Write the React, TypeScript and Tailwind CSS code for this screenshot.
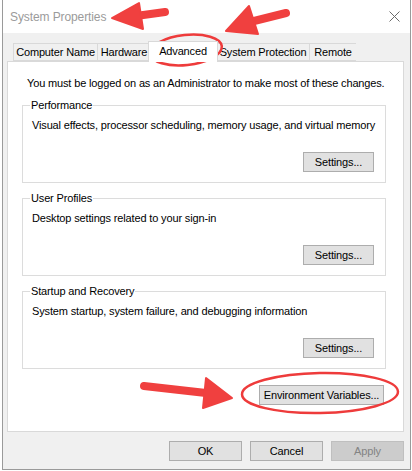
const btn =
  "h-[20px] whitespace-nowrap border border-[#adadad] bg-[#e1e1e1] leading-none text-black flex items-center justify-center";

function GroupBox({
  title,
  text,
  className = "",
}: {
  title: string;
  text: string;
  className?: string;
}) {
  return (
    <div
      className={`relative h-[78px] border border-[#dcdcdc] pl-[9px] pr-[11px] pt-[12px] ${className}`}
    >
      {/* legend over the top border */}
      <span className="absolute -top-[8px] left-[7px] whitespace-nowrap bg-white px-[1px] leading-[15px]">
        {title}
      </span>
      <p className="whitespace-nowrap leading-[15px]">{text}</p>
      <div className="mt-[19px] flex justify-end">
        <button className={`${btn} w-[71px]`}>Settings...</button>
      </div>
    </div>
  );
}

function Tab({
  label,
  active = false,
  className = "",
}: {
  label: string;
  active?: boolean;
  className?: string;
}) {
  if (active) {
    return (
      <div
        className={`relative z-10 -mx-[2px] -mb-[1px] flex h-[21px] items-center justify-center whitespace-nowrap border border-b-0 border-[#d9d9d9] bg-white pb-[2px] leading-none ${className}`}
      >
        {label}
      </div>
    );
  }
  return (
    <div
      className={`flex h-[18px] items-center justify-center whitespace-nowrap border border-r-0 border-[#d9d9d9] bg-[#f0f0f0] leading-none ${className}`}
    >
      {label}
    </div>
  );
}

export default function App() {
  return (
    <div
      className="relative h-[471px] w-[412px] overflow-hidden bg-white text-[11px] tracking-[-0.15px] text-black"
      style={{ fontFamily: '"Liberation Sans", Arial, sans-serif' }}
    >
      <div className="ml-[2px] flex h-[470px] w-[409px] flex-col border-x border-b border-[#9a9a9a]">
        {/* Title bar */}
        <div className="flex h-[33px] items-center justify-between bg-white pl-[7px] pr-[9px]">
          <span className="text-[12px] tracking-[-0.1px] text-[#9b9b9b]">System Properties</span>
          <svg width="11" height="11" viewBox="0 0 11 11" className="mr-[1px]">
            <path d="M0.5 0.5 L10.5 10.5 M10.5 0.5 L0.5 10.5" stroke="#6b6b6b" strokeWidth="1" />
          </svg>
        </div>

        {/* Body */}
        <div className="flex flex-1 flex-col bg-[#f0f0f0] pl-[4px] pr-[6px] pt-[8px]">
          {/* Tabs */}
          <div className="flex items-end pl-[6px]">
            <Tab label="Computer Name" className="w-[84px]" />
            <Tab label="Hardware" className="w-[53px]" />
            <Tab label="Advanced" active className="w-[70px]" />
            <Tab label="System Protection" className="w-[93px]" />
            <Tab label="Remote" className="w-[47px] border-r" />
          </div>

          {/* Tab panel */}
          <div className="h-[371px] border border-[#d9d9d9] bg-white pl-[14px] pr-[17px] pt-[14px]">
            <p className="whitespace-nowrap pl-[5px] leading-[15px]">
              You must be logged on as an Administrator to make most of these changes.
            </p>
            <GroupBox
              title="Performance"
              text="Visual effects, processor scheduling, memory usage, and virtual memory"
              className="mt-[14px]"
            />
            <GroupBox
              title="User Profiles"
              text="Desktop settings related to your sign-in"
              className="mt-[15px]"
            />
            <GroupBox
              title="Startup and Recovery"
              text="System startup, system failure, and debugging information"
              className="mt-[15px]"
            />
            <div className="mt-[16px] flex justify-end pr-[2px]">
              <button className={`${btn} w-[125px]`}>Environment Variables...</button>
            </div>
          </div>

          {/* Dialog buttons */}
          <div className="mt-[9px] flex justify-end gap-[8px]">
            <button className={`${btn} w-[73px]`}>OK</button>
            <button className={`${btn} w-[73px]`}>Cancel</button>
            <button className="flex h-[20px] w-[73px] items-center justify-center border border-[#bfbfbf] bg-[#cccccc] leading-none text-[#838383]">
              Apply
            </button>
          </div>
        </div>
      </div>

      {/* Red annotations */}
      <svg
        className="pointer-events-none absolute left-0 top-0"
        width="412"
        height="471"
        viewBox="0 0 412 471"
      >
        <g fill="#f0403f" stroke="#f0403f" strokeLinecap="round" strokeLinejoin="round">
          <line x1="165" y1="12" x2="136" y2="16" strokeWidth="8" />
          <polygon points="112,18 139,3 143,29" strokeWidth="2" />
          <line x1="286" y1="13" x2="250" y2="22" strokeWidth="8" />
          <polygon points="226,31 249,6 258,34" strokeWidth="2" />
          <line x1="144" y1="386" x2="206" y2="393" strokeWidth="8" />
          <polygon points="232,398 206,378 203,408" strokeWidth="2" />
        </g>
        <g fill="none" stroke="#ee3b3b" strokeWidth="2.5">
          <ellipse cx="186" cy="50" rx="36" ry="15" transform="rotate(-6 186 50)" />
          <ellipse cx="320" cy="393" rx="78" ry="20" transform="rotate(-1 320 393)" />
        </g>
      </svg>
    </div>
  );
}
